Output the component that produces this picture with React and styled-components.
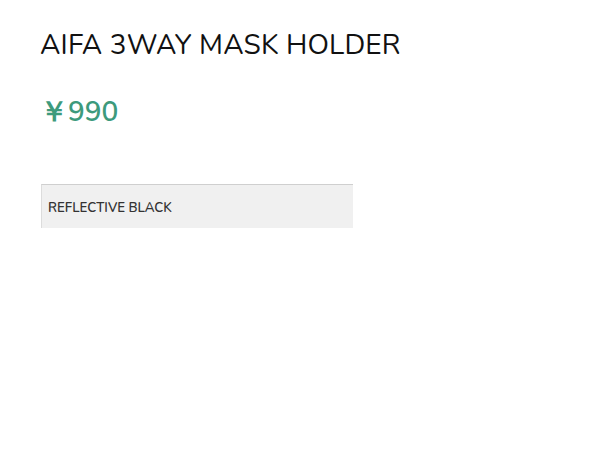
import React from 'react';
import styled, { createGlobalStyle } from 'styled-components';

const GlobalStyle = createGlobalStyle`
  body {
    margin: 0;
    background: #fff;
    font-family: "Nunito", "Lato", "Noto Sans", sans-serif;
  }
`;

const Page = styled.div`
  padding: 28px 40px;
`;

const Title = styled.h1`
  margin: 0;
  font-size: 28px;
  font-weight: 400;
  color: #111;
  line-height: 34px;
  letter-spacing: 0.15px;
`;

const Price = styled.div`
  margin-top: 33px;
  font-size: 28px;
  font-weight: 600;
  color: #3d9a7c;
  line-height: 34px;
`;

const Variant = styled.div`
  margin-top: 55px;
  margin-left: 1px;
  width: 312px;
  height: 44px;
  box-sizing: border-box;
  display: flex;
  align-items: center;
  padding-left: 6px;
  padding-top: 2px;
  background: #f0f0f0;
  border-top: 1px solid #cfcfcf;
  border-left: 1px solid #dcdcdc;
  font-size: 13.3px;
  font-weight: 600;
  color: #333;
`;

export default function App() {
  return (
    <>
      <GlobalStyle />
      <Page>
        <Title>AIFA 3WAY MASK HOLDER</Title>
        <Price>￥990</Price>
        <Variant>REFLECTIVE BLACK</Variant>
      </Page>
    </>
  );
}
